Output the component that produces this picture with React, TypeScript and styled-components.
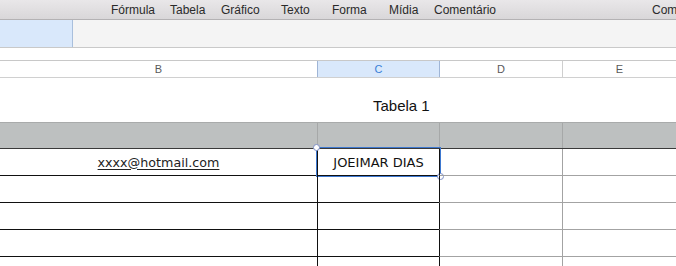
import styled, { createGlobalStyle } from 'styled-components';

const GlobalStyle = createGlobalStyle`
  html, body {
    margin: 0;
    padding: 0;
    background: #fff;
    overflow: hidden;
  }
  body {
    font-family: "Liberation Sans", Arial, sans-serif;
  }
`;

const Page = styled.div`
  width: 676px;
  height: 266px;
  overflow: hidden;
  background: #fff;
`;

const MenuBar = styled.div`
  display: flex;
  align-items: center;
  height: 19px;
  border-bottom: 1px solid #b4b2b4;
  background: linear-gradient(#e9e7e9, #d9d7d9);
  font-size: 12px;
  color: #2a2a2a;
  padding-left: 111px;
  white-space: nowrap;
`;

const MenuItem = styled.span<{ $w: number }>`
  width: ${(p) => p.$w}px;
  flex: none;
`;

const FormulaBar = styled.div`
  display: flex;
  height: 27px;
  background: #f4f4f4;
  border-bottom: 1px solid #c9c9c9;
`;

const CellRef = styled.div`
  width: 72px;
  background: #d9e8fb;
  border-right: 1px solid #a9bfdc;
`;

const Spacer = styled.div`
  height: 12px;
`;

const Columns = styled.div`
  display: grid;
  grid-template-columns: 317px 122px 123px 1fr;
  height: 16px;
  border-top: 1px solid #c8c8c8;
  border-bottom: 1px solid #d0d0d0;
`;

const ColHead = styled.div<{ $sel?: boolean; $first?: boolean }>`
  display: flex;
  align-items: center;
  justify-content: center;
  font-size: 11px;
  color: ${(p) => (p.$sel ? '#3a7fd8' : '#5a5a5a')};
  background: ${(p) => (p.$sel ? '#d9e8fb' : '#fff')};
  border-left: ${(p) => (p.$first ? 'none' : p.$sel ? '1px solid #9fb5d6' : '1px solid #cfcfcf')};
  box-shadow: ${(p) => (p.$sel ? '1px 0 0 #9fb5d6' : 'none')};
  position: relative;
  z-index: ${(p) => (p.$sel ? 1 : 0)};
`;

const TitleRow = styled.div`
  height: 44px;
  display: flex;
  align-items: center;
  padding-left: 373px;
  padding-top: 11px;
  box-sizing: border-box;
  font-family: "Liberation Sans", Arial, sans-serif;
  font-size: 15px;
  color: #111;
`;

const HeaderBand = styled.div`
  display: grid;
  grid-template-columns: 317px 122px 123px 1fr;
  height: 25px;
  background: #bdc0c0;
  border-top: 1px solid #a9abab;
  border-bottom: 1px solid #3a3a3a;
`;

const BandCell = styled.div<{ $first?: boolean }>`
  border-left: ${(p) => (p.$first ? 'none' : '1px solid #a6a8a8')};
`;

const Row = styled.div`
  display: grid;
  grid-template-columns: 317px 122px 123px 1fr;
  height: 27px;
`;

const Cell = styled.div<{ $first?: boolean; $light?: boolean; $strongLeft?: boolean }>`
  position: relative;
  display: flex;
  align-items: center;
  justify-content: center;
  font-family: "DejaVu Sans", Verdana, sans-serif;
  font-size: 13px;
  color: #111;
  border-bottom: 1px solid ${(p) => (p.$light ? '#a3a3a3' : '#111')};
  border-left: ${(p) =>
    p.$first ? 'none' : p.$strongLeft ? '1px solid #111' : p.$light ? '1px solid #a3a3a3' : '1px solid #111'};
`;

const Email = styled.span`
  font-size: 12.7px;
  text-decoration: underline;
  text-underline-offset: 2px;
  color: #222;
`;

const Selection = styled.div`
  position: absolute;
  left: -2px;
  top: -2px;
  right: -2px;
  bottom: -2px;
  border: 1px solid #3d78d0;
  pointer-events: none;
`;

const Handle = styled.div<{ $pos: 'tl' | 'br' }>`
  position: absolute;
  width: 5px;
  height: 5px;
  border-radius: 50%;
  background: #fff;
  border: 1px solid #7e8fc6;
  ${(p) => (p.$pos === 'tl' ? 'left: -4px; top: -4px;' : 'right: -4px; bottom: -4px;')}
`;

const menu: [string, number][] = [
  ['Fórmula', 59],
  ['Tabela', 51],
  ['Gráfico', 60],
  ['Texto', 51],
  ['Forma', 57],
  ['Mídia', 45],
  ['Comentário', 218],
  ['Com', 40],
];

export default function App() {
  const rows = [0, 1, 2, 3, 4];
  return (
    <>
      <GlobalStyle />
      <Page>
        <MenuBar>
          {menu.map(([t, w]) => (
            <MenuItem key={t} $w={w}>
              {t}
            </MenuItem>
          ))}
        </MenuBar>
        <FormulaBar>
          <CellRef />
        </FormulaBar>
        <Spacer />
        <Columns>
          <ColHead $first>B</ColHead>
          <ColHead $sel>C</ColHead>
          <ColHead>D</ColHead>
          <ColHead>E</ColHead>
        </Columns>
        <TitleRow>Tabela 1</TitleRow>
        <HeaderBand>
          <BandCell $first />
          <BandCell />
          <BandCell />
          <BandCell />
        </HeaderBand>
        {rows.map((r) => (
          <Row key={r}>
            <Cell $first>{r === 0 && <Email>xxxx@hotmail.com</Email>}</Cell>
            <Cell>
              {r === 0 && (
                <>
                  JOEIMAR DIAS
                  <Selection>
                    <Handle $pos="tl" />
                    <Handle $pos="br" />
                  </Selection>
                </>
              )}
            </Cell>
            <Cell $light $strongLeft />
            <Cell $light />
          </Row>
        ))}
      </Page>
    </>
  );
}
